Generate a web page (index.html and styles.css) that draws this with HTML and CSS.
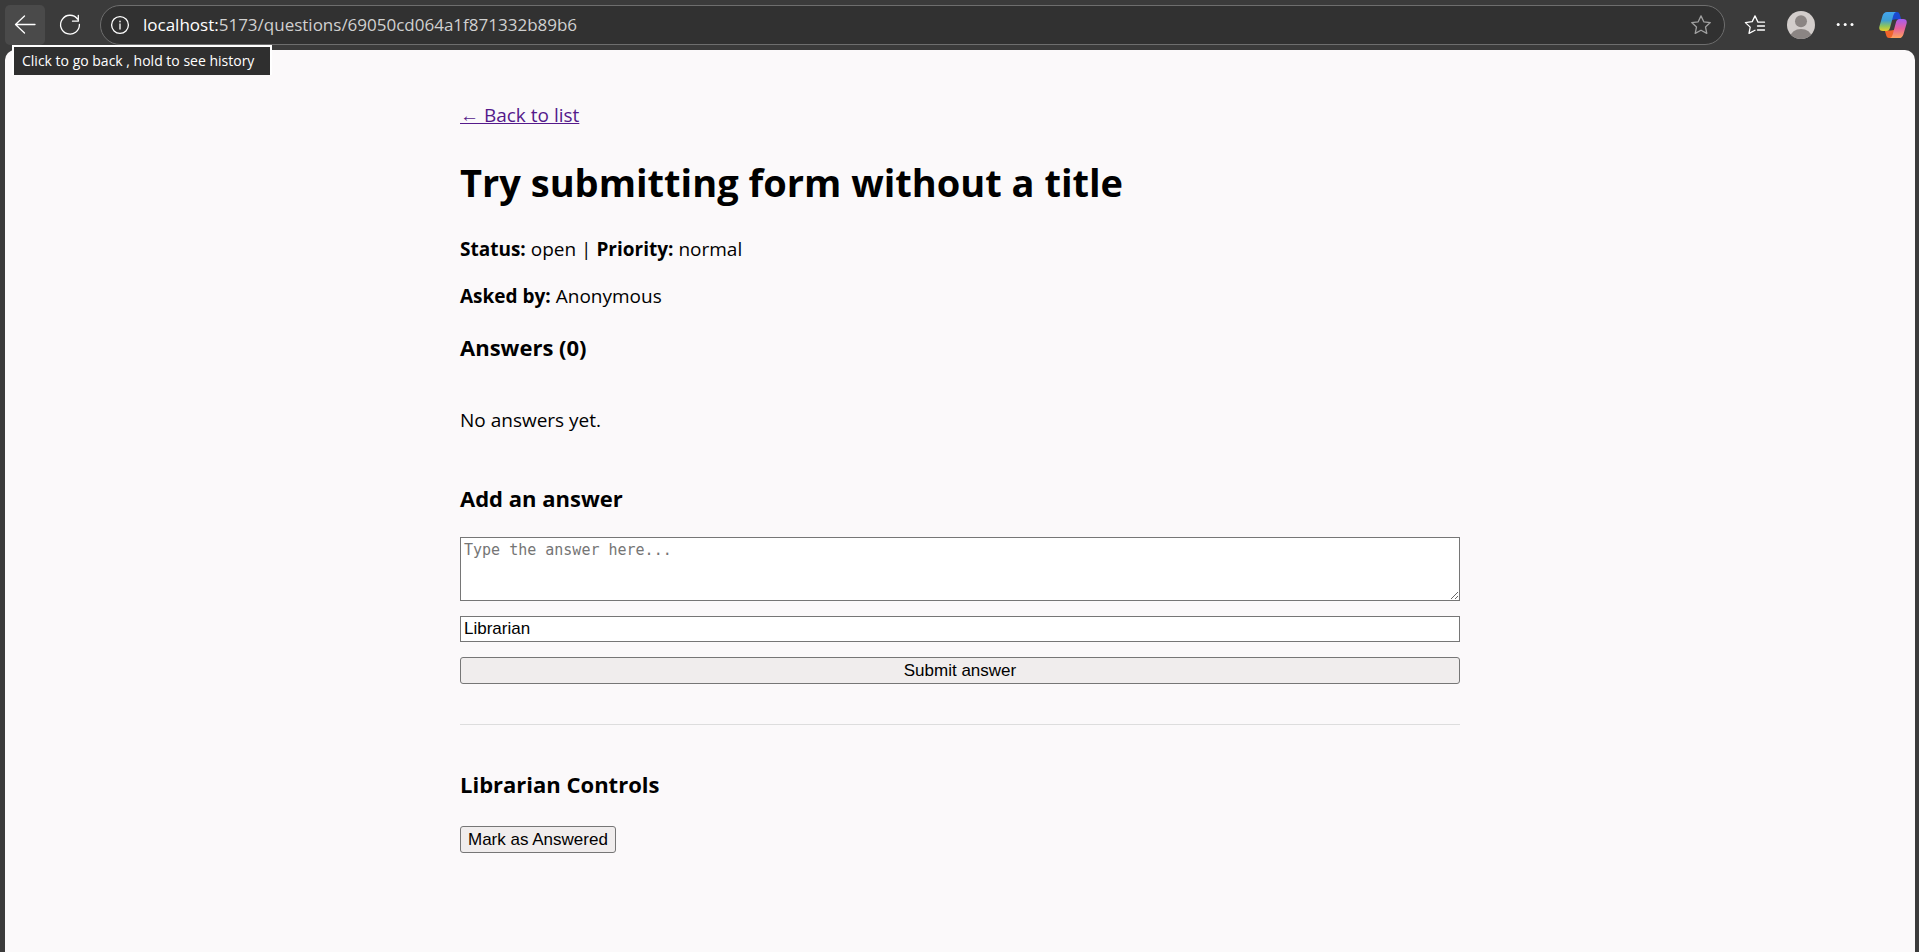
FILE: index.html
```html
<!DOCTYPE html>
<html lang="en">
<head>
<meta charset="utf-8">
<title>Question</title>
<link rel="stylesheet" href="styles.css">
</head>
<body>
<header class="toolbar">
  <div class="back-wrap">
    <button class="tool back" type="button" aria-label="Back" aria-describedby="back-tip">
      <svg width="40" height="40" viewBox="0 0 40 40"><path d="M30 19.5H10.5M19.5 11l-9 8.500 9 8.500"/></svg>
    </button>
    <div class="tooltip" id="back-tip" role="tooltip">Click to go back , hold to see history</div>
  </div>
  <button class="tool reload" type="button" aria-label="Refresh">
    <svg width="40" height="40" viewBox="0 0 40 40"><path d="M29.400 19.500A9.400 9.400 0 1 1 27.500 14M22.500 16.200H28.300V10.300"/></svg>
  </button>
  <div class="address">
    <svg class="info" width="20" height="20" viewBox="0 0 20 20"><circle cx="10" cy="10" r="8.4"/><path d="M10 9v5"/><circle class="dot" cx="10" cy="6.4" r="1"/></svg>
    <a class="url" href="#"><span class="host">localhost:</span>5173/questions/69050cd064a1f871332b89b6</a>
    <button class="tool star" type="button" aria-label="Add to favorites">
      <svg width="22" height="22" viewBox="0 0 22 22"><path d="M11 1.900l2.800 5.900 6.500.8-4.800 4.400 1.300 6.400-5.800-3.200-5.800 3.200 1.300-6.400-4.800-4.400 6.500-.8z"/></svg>
    </button>
  </div>
  <nav class="actions" aria-label="Browser">
    <button class="tool" type="button" aria-label="Favorites">
      <svg width="22" height="22" viewBox="0 0 22 22"><path d="M20.500 8.200H14L11 1.900 8.200 7.600 1.400 8.600l4.800 4.500L5 19.400l6-3.200M13.500 12h7M13.500 16h7"/></svg>
    </button>
    <button class="tool" type="button" aria-label="Profile">
      <svg class="fill" width="28" height="28" viewBox="0 0 28 28"><clipPath id="face"><circle cx="14" cy="14" r="14"/></clipPath><g clip-path="url(#face)"><path fill="#d2cdcb" d="M0 0h28v28H0z"/><circle cx="14" cy="10.2" r="6" fill="#8b8583"/><ellipse cx="14" cy="26" rx="10.5" ry="8" fill="#8b8583"/></g></svg>
    </button>
    <button class="tool" type="button" aria-label="Settings and more">
      <svg class="fill" width="18" height="18" viewBox="0 0 18 18"><g fill="#fff"><circle cx="2.2" cy="8.6" r="1.5"/><circle cx="9.2" cy="8.6" r="1.5"/><circle cx="16" cy="8.6" r="1.5"/></g></svg>
    </button>
  </nav>
  <button class="tool copilot" type="button" aria-label="Copilot">
    <svg class="fill" width="28" height="28" viewBox="0 0 28 28">
      <defs>
        <linearGradient id="cool" x1="0" y1="0" x2="0" y2="1"><stop offset="0" stop-color="#43a5ef"/><stop offset=".45" stop-color="#3f9fd0"/><stop offset=".75" stop-color="#8fc55a"/><stop offset="1" stop-color="#e8cf2c"/></linearGradient>
        <linearGradient id="warm" x1="0" y1="0" x2="0" y2="1"><stop offset="0" stop-color="#a55cf0"/><stop offset=".5" stop-color="#e5609c"/><stop offset="1" stop-color="#ffa45c"/></linearGradient>
      </defs>
      <path fill="#1b49cf" d="M13 1h5q2 0 2.600 2l1.600 5.200h-5.700L13 9z"/>
      <path fill="#f0642b" d="M15 27h-5q-2 0-2.600-2L5.800 19.500h5.700L15 19z"/>
      <path fill="url(#cool)" d="M8 1h9q-2 .8-2.700 3.500l-3.200 12Q10.200 20 7.500 20H4Q-.6 20 .4 15.500L3.600 4.600Q4.800 1 8 1z"/>
      <path fill="url(#warm)" d="M20 27h-9q2-.8 2.700-3.500l3.200-12Q17.800 8 20.500 8H24q4.600 0 3.600 4.500l-3.200 10.900Q23.200 27 20 27z"/>
    </svg>
  </button>
</header>
<div class="viewport">
  <main class="page">
    <a class="back-link" href="#">← Back to list</a>
    <h1>Try submitting form without a title</h1>
    <p><strong>Status:</strong> open | <strong>Priority:</strong> normal</p>
    <p><strong>Asked by:</strong> Anonymous</p>
    <h3>Answers (0)</h3>
    <p class="empty">No answers yet.</p>
    <h3>Add an answer</h3>
    <form class="answer-form">
      <textarea rows="3" placeholder="Type the answer here..." aria-label="Answer"></textarea>
      <input type="text" value="Librarian" aria-label="Name">
      <button class="btn" type="button">Submit answer</button>
    </form>
    <section class="controls">
      <h3>Librarian Controls</h3>
      <button class="btn" type="button">Mark as Answered</button>
    </section>
  </main>
</div>
</body>
</html>
```
FILE: styles.css
```css
* { box-sizing: border-box; }

body {
  margin: 0;
  min-height: 100vh;
  display: flex;
  flex-direction: column;
  background: #3b3b3b;
  color: #000;
  font: 19px/27px "Open Sans", "Noto Sans", sans-serif;
}

/* Browser toolbar */
.toolbar {
  display: flex;
  align-items: center;
  height: 50px;
  padding: 0 12px 0 5px;
}

.tool {
  display: flex;
  align-items: center;
  justify-content: center;
  padding: 0;
  border: 0;
  border-radius: 5px;
  background: none;
}

.toolbar svg:not(.fill) {
  fill: none;
  stroke: #fff;
  stroke-width: 1.3;
  stroke-linecap: round;
  stroke-linejoin: round;
}

.back-wrap { position: relative; }
.back { background: #4a4a4a; }
.reload { margin: 0 10px 0 5px; }

.tooltip {
  position: absolute;
  top: 40px;
  left: 7px;
  z-index: 1;
  padding: 4px 16px 4px 8px;
  border: 2px solid #fff;
  border-bottom: 0;
  background: #2f2f2f;
  color: #fff;
  font-size: 14px;
  line-height: 20px;
  white-space: nowrap;
}

.address {
  display: flex;
  flex: 1;
  align-items: center;
  height: 40px;
  padding: 0 12px 0 9px;
  border: 1px solid #6e6e6e;
  border-radius: 20px;
  background: #313131;
}

.toolbar .info { stroke: #d0d0d0; }
.toolbar .info .dot { fill: #d0d0d0; stroke: none; }

.url {
  flex: 1;
  margin-left: 13px;
  padding-bottom: 2px;
  color: #d0d0d0;
  font-size: 17px;
  text-decoration: none;
}

.host { color: #fff; }
.toolbar .star svg { stroke: #a0a0a0; }

.actions {
  display: flex;
  align-items: center;
  gap: 21px;
  margin: 0 25px 0 19px;
}

/* Page */
.viewport {
  flex: 1;
  margin: 0 4px 0 5px;
  padding: 52px 20px 40px;
  border-radius: 10px 10px 0 0;
  background: #fbf9fa;
}

.page {
  max-width: 1000px;
  margin: 0 auto;
}

.back-link { display: block; width: fit-content; color: #551a8b; }

h1 {
  margin: 27px 0;
  font-size: 38px;
  line-height: 53px;
}

h3 {
  margin: 22px 0 23px;
  font-size: 22px;
  line-height: 31px;
}

p { margin: 20px 0; }
.empty { margin: 44px 0 49px; }

.answer-form { display: grid; gap: 15px; }

textarea,
input,
.btn {
  margin: 0;
  border: 1px solid #767676;
  font: 17px/19px "Liberation Sans", Arial, sans-serif;
}

textarea {
  height: 64px;
  padding: 3px;
  border-radius: 0;
  background: #fff;
  font: 15px/19px "DejaVu Sans Mono", monospace;
  resize: vertical;
}

textarea::placeholder { color: #757575; }

input {
  height: 26px;
  padding: 1px 3px;
  background: #fff;
  color: #000;
}

.btn {
  height: 27px;
  padding: 1px 7px;
  border-radius: 3px;
  background: #f0eded;
  color: #000;
}

.controls {
  margin-top: 40px;
  padding-top: 44px;
  border-top: 1px solid #ddd;
}

.controls h3 { margin: 0 0 25px; }
```
